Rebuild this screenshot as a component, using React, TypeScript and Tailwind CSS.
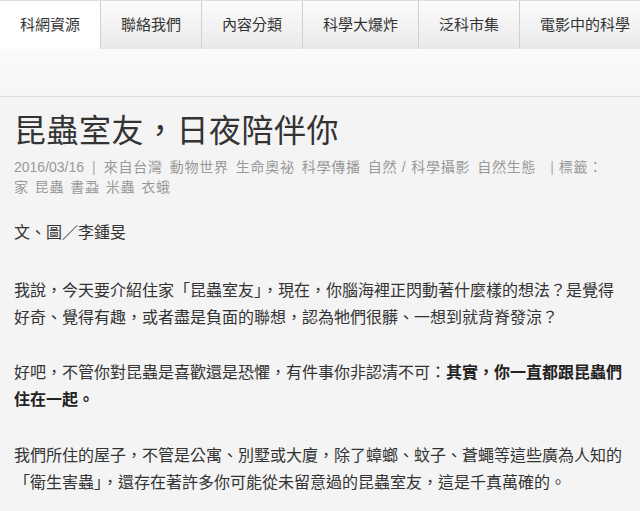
const tabs = ["科網資源", "聯絡我們", "內容分類", "科學大爆炸", "泛科市集", "電影中的科學"];

const categories = ["來自台灣", "動物世界", "生命奧祕", "科學傳播", "自然 / 科學攝影", "自然生態"];
const tags = ["家", "昆蟲", "書蝨", "米蟲", "衣蛾"];

const sans = "font-['Liberation_Sans','Noto_Sans_CJK_TC',sans-serif]";

export default function App() {
  return (
    <div className={`min-h-[511px] bg-[#f4f4f4] ${sans}`}>
      {/* header */}
      <div className="h-[97px] border-b border-[#dcdcdc] bg-gradient-to-b from-white to-[#f6f6f6]">
        <nav className="flex h-[49px] overflow-hidden border-t border-[#dedede]">
          {tabs.map((t, i) => (
            <a
              key={t}
              className={`flex shrink-0 items-center whitespace-nowrap border-r border-[#d0d0d0] px-5 text-[15px] text-[#333] ${
                i === 0 ? "bg-white" : "bg-gradient-to-b from-[#fcfcfc] to-[#e9e9e9]"
              }`}
            >
              {t}
            </a>
          ))}
        </nav>
      </div>

      <article className="px-[14px]">
        <h1 className="mt-[14px] font-['Liberation_Serif','Noto_Sans_CJK_TC',serif] text-[32px] leading-[40px] tracking-[0.5px] text-[#333]">
          昆蟲室友，日夜陪伴你
        </h1>

        <div className="mt-[6px] text-[14px] leading-[20px] text-[#999]">
          <span>2016/03/16</span>
          <span className="mx-[8px] text-[#aaa]">|</span>
          {categories.map((c) => (
            <a key={c} className="mr-[7px] tracking-[0.75px]">
              {c}
            </a>
          ))}
          <span className="ml-[7px] mr-[5px] text-[#aaa]">|</span>
          <span className="tracking-[0.75px]">標籤：</span>
          <span className="inline-block">
            {tags.map((t) => (
              <a key={t} className="mr-[6px] tracking-[0.75px]">
                {t}
              </a>
            ))}
          </span>
        </div>

        <div className="mt-[22px] text-[16px] leading-[27px] text-[#333]">
          <p className="mb-[31px]">文、圖／李鍾旻</p>
          <p className="mb-[28px]">
            我說，今天要介紹住家「昆蟲室友」，現在，你腦海裡正閃動著什麼樣的想法？是覺得好奇、覺得有趣，或者盡是負面的聯想，認為牠們很髒、一想到就背脊發涼？
          </p>
          <p className="mb-[29px]">
            好吧，不管你對昆蟲是喜歡還是恐懼，有件事你非認清不可：
            <strong className="font-bold text-[#222]">其實，你一直都跟昆蟲們住在一起。</strong>
          </p>
          <p className="mb-[29px]">
            我們所住的屋子，不管是公寓、別墅或大廈，除了蟑螂、蚊子、蒼蠅等這些廣為人知的「衛生害蟲」，還存在著許多你可能從未留意過的昆蟲室友，這是千真萬確的。
          </p>
        </div>
      </article>
    </div>
  );
}
